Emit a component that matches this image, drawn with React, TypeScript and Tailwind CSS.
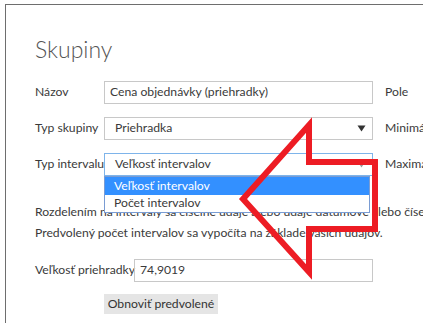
import React from 'react';

const font = { fontFamily: 'Lato, "Open Sans", sans-serif' };

const Caret = ({ muted }: { muted?: boolean }) => (
  <svg width="9" height="7" viewBox="0 0 9 7" className={muted ? 'text-[#9a9a9a]' : 'text-[#333]'}>
    <path d="M0.5 0.5 L8.5 0.5 L4.5 6.5 Z" fill="currentColor" />
  </svg>
);

export default function App() {
  return (
    <div className="relative w-[423px] h-[323px] overflow-hidden bg-white text-[#3a3a3a] text-[12.2px]" style={font}>
      <div className="ml-[5px] mt-[4px] h-[319px] border-l border-t border-[#6e6e6e] pl-[29px] pt-[28px] overflow-hidden">
        <h1 className="text-[23px] font-light leading-[32px] text-[#555]">Skupiny</h1>

        <div className="mt-[16px] flex flex-col gap-[13px]">
          <div className="flex items-center h-[23px]">
            <span className="w-[69px] shrink-0 whitespace-nowrap">Názov</span>
            <div className="w-[269px] shrink-0 h-[23px] border border-[#c8c8c8] flex items-center px-[5px] whitespace-nowrap">
              Cena objednávky (priehradky)
            </div>
            <span className="ml-[12px] shrink-0 whitespace-nowrap">Pole</span>
          </div>

          <div className="flex items-center h-[23px]">
            <span className="w-[69px] shrink-0 whitespace-nowrap">Typ skupiny</span>
            <div className="w-[269px] shrink-0 h-[23px] border border-[#c8c8c8] flex items-center justify-between pl-[10px] pr-[6px] whitespace-nowrap">
              <span>Priehradka</span>
              <Caret />
            </div>
            <span className="ml-[12px] shrink-0 whitespace-nowrap">Minimálna</span>
          </div>

          <div className="relative flex items-center h-[23px]">
            <span className="w-[69px] shrink-0 whitespace-nowrap">Typ intervalu</span>
            <div className="w-[269px] shrink-0 h-[23px] border border-[#7eb4ea] flex items-center justify-between pl-[10px] pr-[6px] whitespace-nowrap">
              <span>Veľkosť intervalov</span>
              <Caret muted />
            </div>
            <span className="ml-[12px] shrink-0 whitespace-nowrap">Maximálna</span>

            <div className="absolute left-[69px] top-[23px] w-[266px] border border-[#7a9cd3] bg-white z-10">
              <div className="h-[18px] bg-[#3390ff] text-white pl-[9px] flex items-center whitespace-nowrap">Veľkosť intervalov</div>
              <div className="h-[17px] pl-[9px] flex items-center whitespace-nowrap">Počet intervalov</div>
            </div>
          </div>
        </div>

        <div className="mt-[25px] leading-[21px] whitespace-nowrap">
          <p>Rozdelením na intervaly sa číselné údaje alebo údaje dátumové alebo číselné</p>
          <p>Predvolený počet intervalov sa vypočíta na základe vašich údajov.</p>
        </div>

        <div className="mt-[16px] flex items-center h-[23px]">
          <span className="w-[99px] shrink-0 whitespace-nowrap">Veľkosť priehradky</span>
          <div className="w-[239px] shrink-0 h-[23px] border border-[#c8c8c8] flex items-center px-[5px]">74,9019</div>
        </div>

        <div className="mt-[12px] ml-[69px]">
          <button className="h-[20px] w-[114px] bg-[#e5e5e5] text-[#333] flex items-center justify-center whitespace-nowrap">
            Obnoviť predvolené
          </button>
        </div>
      </div>

      <svg className="absolute left-0 top-0 z-20 pointer-events-none" width="423" height="323" viewBox="0 0 423 323">
        <polygon
          points="243,199 309,125 309,162 375,162 375,229 309,229 309,272"
          fill="none"
          stroke="#ed1c24"
          strokeWidth="6"
          strokeLinejoin="miter"
        />
      </svg>
    </div>
  );
}
